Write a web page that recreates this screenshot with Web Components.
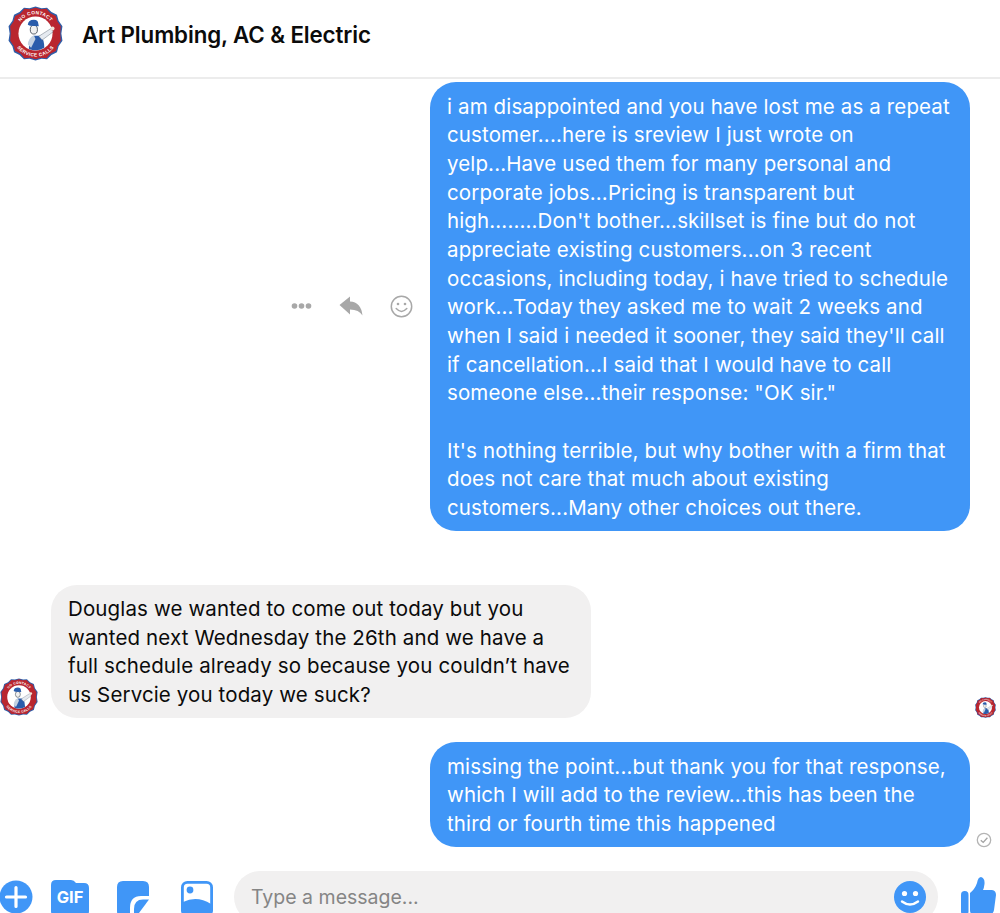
<!DOCTYPE html>
<html>
<head>
<meta charset="utf-8">
<title>Art Plumbing, AC & Electric</title>
<style>
    html, body { margin: 0; padding: 0; background: #fff; }
    body { font-family: Inter, "Noto Sans", "Liberation Sans", sans-serif; }
</style>
</head>
<body>
<chat-app>
    <chat-header slot="header" title-text="Art Plumbing, AC &amp; Electric"></chat-header>

    <chat-row side="me" actions>
        <chat-bubble side="me">i am disappointed and you have lost me as a repeat<br>customer....here is sreview I just wrote on<br>yelp...Have used them for many personal and<br>corporate jobs...Pricing is transparent but<br>high........Don't bother...skillset is fine but do not<br>appreciate existing customers...on 3 recent<br>occasions, including today, i have tried to schedule<br>work...Today they asked me to wait 2 weeks and<br>when I said i needed it sooner, they said they'll call<br>if cancellation...I said that I would have to call<br>someone else...their response: "OK sir."<br><br>It's nothing terrible, but why bother with a firm that<br>does not care that much about existing<br>customers...Many other choices out there.</chat-bubble>
    </chat-row>

    <chat-row side="them" seen>
        <chat-bubble side="them">Douglas we wanted to come out today but you<br>wanted next Wednesday the 26th and we have a<br>full schedule already so because you couldn’t have<br>us Servcie you today we suck?</chat-bubble>
    </chat-row>

    <chat-row side="me" sent>
        <chat-bubble side="me">missing the point...but thank you for that response,<br>which I will add to the review...this has been the<br>third or fourth time this happened</chat-bubble>
    </chat-row>

    <chat-composer></chat-composer>
</chat-app>

<script>
class companyLogo extends HTMLElement {
    constructor() {
        super();
        this.shadowDOM = this.attachShadow({ mode: "open" });
    }
    connectedCallback() {
        const size = this.getAttribute("size") || 38;
        const id = "arc" + size;
        this.shadowDOM.innerHTML = `
        <style>
            :host { display: block; width: ${size}px; height: ${size}px; flex: none; }
            svg { display: block; width: 100%; height: 100%; }
            text { font-family: "Liberation Sans", sans-serif; font-weight: 700; font-size: 8.6px; fill: #fff; letter-spacing: .7px; }
        </style>
        <svg viewBox="0 0 100 100">
            <defs>
                <path id="${id}t" d="M15 50 A35 35 0 0 1 85 50"/>
                <path id="${id}b" d="M8 50 A42 42 0 0 0 92 50"/>
            </defs>
            <polygon fill="#2f5da8" points="50,1 61,4 71,3 79,11 89,16 92,27 99,37 97,50 99,63 92,73 89,84 79,89 71,97 61,96 50,99 39,96 29,97 21,89 11,84 8,73 1,63 3,50 1,37 8,27 11,16 21,11 29,3 39,4"/>
            <polygon fill="#b9262f" points="50,3 60,6 70,5 77,13 87,18 90,28 96,37 95,50 96,63 90,72 87,82 77,87 70,95 60,94 50,97 40,94 30,95 23,87 13,82 10,72 4,63 5,50 4,37 10,28 13,18 23,13 30,5 40,6"/>
            <circle cx="50" cy="50" r="31" fill="#fff"/>
            <path d="M38 78 Q37 60 47 54 L60 54 Q66 62 66 76 Q52 84 38 78Z" fill="#2a5cab"/>
            <path d="M36 70 Q37 58 47 53 L50 60 L42 76Z" fill="#c4d2e2"/>
            <path d="M56 55 L78 41 L82 47 L62 62Z" fill="#e6eaf0" stroke="#5a6675" stroke-width=".8"/>
            <ellipse cx="47" cy="43" rx="6.5" ry="8" fill="#f0f0f0" stroke="#1f2a38" stroke-width="1.3"/>
            <path d="M36 34 Q37 25 47 25 Q55 25 55 32 L56 37 L40 36Z" fill="#2a5cab"/>
            <circle cx="81" cy="41" r="3.6" fill="#f0e3d6"/>
            <text><textPath href="#${id}t" startOffset="50%" text-anchor="middle">NO CONTACT</textPath></text>
            <text><textPath href="#${id}b" startOffset="50%" text-anchor="middle">SERVICE CALLS</textPath></text>
        </svg>
        `;
    }
}

class chatApp extends HTMLElement {
    constructor() {
        super();
        this.shadowDOM = this.attachShadow({ mode: "open" });
    }
    connectedCallback() {
        this.shadowDOM.innerHTML = `
        <style>
            :host {
                display: block;
                width: 1000px;
                height: 913px;
                overflow: hidden;
                background: #fff;
            }
            .list {
                display: flex;
                flex-direction: column;
            }
        </style>
        <slot name="header"></slot>
        <div class="list"><slot></slot></div>
        `;
    }
}

class chatHeader extends HTMLElement {
    constructor() {
        super();
        this.shadowDOM = this.attachShadow({ mode: "open" });
    }
    connectedCallback() {
        this.shadowDOM.innerHTML = `
        <style>
            :host {
                display: flex;
                align-items: center;
                box-sizing: border-box;
                height: 79px;
                padding: 0 0 10px 8px;
                gap: 19px;
                border-bottom: 2px solid #ececec;
            }
            h1 {
                margin: 1px 0 0;
                font-size: 22.3px;
                font-weight: 600;
                letter-spacing: -.1px;
                color: #0b0b0b;
            }
        </style>
        <company-logo size="55"></company-logo>
        <h1>${this.getAttribute("title-text").replace("&", "&amp;")}</h1>
        `;
    }
}

class chatRow extends HTMLElement {
    constructor() {
        super();
        this.shadowDOM = this.attachShadow({ mode: "open" });
    }
    connectedCallback() {
        const me = this.getAttribute("side") === "me";
        let before = "";
        let after = "";
        if (this.hasAttribute("actions")) before = `<message-actions></message-actions>`;
        if (!me) before = `<company-logo size="38"></company-logo>`;
        if (this.hasAttribute("seen")) after = `<company-logo class="seen" size="21"></company-logo>`;
        if (this.hasAttribute("sent")) after = `
            <svg class="sent" viewBox="0 0 16 16" width="16" height="16">
                <circle cx="8" cy="8" r="6.7" fill="none" stroke="#b4b4b4" stroke-width="1.3"/>
                <path d="M4.8 8.2 L7.2 10.4 L11.4 5.8" fill="none" stroke="#a2a2a2" stroke-width="1.3"/>
            </svg>`;
        this.shadowDOM.innerHTML = `
        <style>
            :host {
                display: flex;
                align-items: ${me ? "center" : "flex-end"};
                justify-content: ${me ? "flex-end" : "flex-start"};
                padding-right: ${me ? "30px" : "0"};
                position: relative;
            }
            :host([actions]) { margin-top: 3px; }
            :host([seen]) { margin-top: 54px; }
            :host([sent]) { margin-top: 24.5px; }
            company-logo { margin: 0 13px 2px 0; }
            company-logo.seen { margin: 0 4px 0 auto; }
            .sent { position: absolute; right: 8px; bottom: -1px; }
        </style>
        ${before}<slot></slot>${after}
        `;
    }
}

class chatBubble extends HTMLElement {
    constructor() {
        super();
        this.shadowDOM = this.attachShadow({ mode: "open" });
    }
    connectedCallback() {
        const me = this.getAttribute("side") === "me";
        this.shadowDOM.innerHTML = `
        <style>
            :host {
                display: block;
                box-sizing: border-box;
                width: 540px;
                padding: 10.5px 10px 8px 17px;
                border-radius: 26px;
                background: ${me ? "#4096f7" : "#f1f0f0"};
                color: ${me ? "#fff" : "#0b0b0b"};
                font-size: 20.5px;
                line-height: 28.67px;
                white-space: nowrap;
                letter-spacing: .13px;
            }
        </style>
        <slot></slot>
        `;
    }
}

class messageActions extends HTMLElement {
    constructor() {
        super();
        this.shadowDOM = this.attachShadow({ mode: "open" });
    }
    connectedCallback() {
        this.shadowDOM.innerHTML = `
        <style>
            :host {
                display: flex;
                align-items: center;
                gap: 27px;
                margin-right: 17px;
            }
            svg { display: block; }
        </style>
        <svg width="21" height="8" viewBox="0 0 21 8" fill="#a8a8a8">
            <circle cx="3.5" cy="4" r="2.8"/><circle cx="10.5" cy="4" r="2.8"/><circle cx="17.5" cy="4" r="2.8"/>
        </svg>
        <svg width="24" height="22" viewBox="0 0 24 22" fill="#a8a8a8">
            <path d="M0.5 10 L11 1.5 L11 6.5 Q22 7 23.5 20.5 Q20 14.5 11 14.5 L11 19.5Z"/>
        </svg>
        <svg width="23" height="23" viewBox="0 0 23 23" fill="none" stroke="#a8a8a8" stroke-width="1.5">
            <circle cx="11.5" cy="11.5" r="10.2"/>
            <circle cx="8" cy="9" r="1.3" fill="#a8a8a8" stroke="none"/>
            <circle cx="15" cy="9" r="1.3" fill="#a8a8a8" stroke="none"/>
            <path d="M6.2 13.6 Q11.5 19.2 16.8 13.6" stroke-linecap="round"/>
        </svg>
        `;
    }
}

class chatComposer extends HTMLElement {
    constructor() {
        super();
        this.shadowDOM = this.attachShadow({ mode: "open" });
    }
    connectedCallback() {
        this.shadowDOM.innerHTML = `
        <style>
            :host {
                display: flex;
                align-items: flex-start;
                margin-top: 24.5px;
                height: 60px;
            }
            svg { display: block; flex: none; }
            .tools { display: flex; align-items: flex-start; width: 234px; flex: none; margin-top: 9px; }
            .plus { margin: 0 18px 0 -1px; }
            .gif { margin: 0 28px 0 0; position: relative; width: 38px; height: 36px; flex: none; }
            .gif svg { position: absolute; left: 0; top: 0; }
            .gif span {
                position: absolute; left: 0; top: 8px; width: 38px; text-align: center;
                color: #fff; font-size: 16.5px; font-weight: 700; line-height: 18px;
            }
            .sticker { margin: 1px 32px 0 0; }
            .photo { margin-top: 1px; }
            .input {
                display: flex;
                align-items: center;
                box-sizing: border-box;
                width: 704px;
                height: 52px;
                padding: 0 12px 0 17px;
                border-radius: 26px;
                background: #f1f0f0;
                flex: none;
            }
            .input span { flex: 1; font-size: 19.5px; color: #858585; }
            .like { margin: 6px 0 0 23px; }
        </style>
        <div class="tools">
            <svg class="plus" width="34" height="34" viewBox="0 0 34 34">
                <circle cx="17" cy="17" r="16.5" fill="#4096f7"/>
                <path d="M17 7.5 V26.5 M7.5 17 H26.5" stroke="#fff" stroke-width="3.2" stroke-linecap="round"/>
            </svg>
            <div class="gif">
                <svg width="38" height="36" viewBox="0 0 38 36">
                    <path d="M5 0 H20 Q23 0 25 3 H33 Q38 3 38 8 V31 Q38 36 33 36 H5 Q0 36 0 31 V5 Q0 0 5 0Z" fill="#4096f7"/>
                </svg>
                <span>GIF</span>
            </div>
            <svg class="sticker" width="32" height="36" viewBox="0 0 32 36">
                <path d="M6 0 H26 Q32 0 32 6 V15 H24 Q13 15 13 27 V36 H6 Q0 36 0 30 V6 Q0 0 6 0Z" fill="#4096f7"/>
                <path d="M17 36 V28 Q17 18.5 26 18.5 H32 L19 36Z" fill="#4096f7"/>
            </svg>
            <svg class="photo" width="32" height="36" viewBox="0 0 32 36">
                <rect x="1.4" y="1.4" width="29.2" height="33" rx="5" fill="#fff" stroke="#4096f7" stroke-width="2.8"/>
                <circle cx="9" cy="9" r="3.4" fill="#4096f7"/>
                <path d="M2 21 Q16 14 30 23 V34 H2Z" fill="#4096f7"/>
            </svg>
        </div>
        <div class="input">
            <span>Type a message...</span>
            <svg width="32" height="32" viewBox="0 0 32 32">
                <circle cx="16" cy="16" r="16" fill="#4096f7"/>
                <circle cx="10.5" cy="12.5" r="2.6" fill="#fff"/>
                <circle cx="21.5" cy="12.5" r="2.6" fill="#fff"/>
                <path d="M8 20.5 Q16 26.5 24 20.5" fill="none" stroke="#fff" stroke-width="2.4" stroke-linecap="round"/>
            </svg>
        </div>
        <svg class="like" width="35" height="38" viewBox="0 0 35 38" fill="#4096f7">
            <rect x="0" y="14" width="7.5" height="24" rx="3.7"/>
            <path d="M9 16 Q14 12 16 6 Q17 0 20 0 Q24 1 23.5 7 Q23 11 22 13 H31 Q35 13.5 35 18 L33 33 Q32 38 27 38 H14 Q9 38 9 33Z"/>
        </svg>
        `;
    }
}

customElements.define("company-logo", companyLogo);
customElements.define("chat-app", chatApp);
customElements.define("chat-header", chatHeader);
customElements.define("chat-row", chatRow);
customElements.define("chat-bubble", chatBubble);
customElements.define("message-actions", messageActions);
customElements.define("chat-composer", chatComposer);
</script>
</body>
</html>
